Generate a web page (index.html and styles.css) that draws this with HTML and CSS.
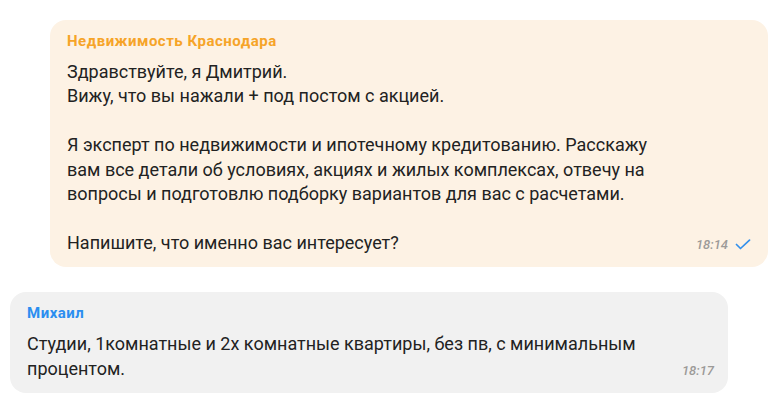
FILE: index.html
```html
<!DOCTYPE html>
<html>
<head>
    <meta charset="utf-8">
    <title>Чат</title>
    <link rel="stylesheet" href="styles.css">
</head>
<body>
    <div class="chat">
        <div class="msg msg-out">
            <div class="author author-orange">Недвижимость Краснодара</div>
            <div class="body">
                <div class="text">Здравствуйте, я Дмитрий.<br>Вижу, что вы нажали + под постом с акцией.<br><br>Я эксперт по недвижимости и ипотечному кредитованию. Расскажу вам все детали об условиях, акциях и жилых комплексах, отвечу на вопросы и подготовлю подборку вариантов для вас с расчетами.<br><br>Напишите, что именно вас интересует?</div>
                <div class="meta">
                    <span class="time">18:14</span>
                    <!-- галочка "отправлено" -->
                    <svg class="check" width="16" height="11" viewBox="0 0 16 11">
                        <path d="M1.5 5.5 L5.5 9.5 L14.5 1.2" fill="none" stroke="#3390ec" stroke-width="1.7" stroke-linecap="round" stroke-linejoin="round"/>
                    </svg>
                </div>
            </div>
        </div>

        <div class="msg msg-in">
            <div class="author author-blue">Михаил</div>
            <div class="body">
                <div class="text">Студии, 1комнатные и 2х комнатные квартиры, без пв, с минимальным процентом.</div>
                <div class="meta">
                    <span class="time">18:17</span>
                </div>
            </div>
        </div>
    </div>
</body>
</html>
```

FILE: styles.css
```css
body {
    margin: 0;
    background: #fff;
    font-family: Roboto, "Noto Sans", sans-serif;
    color: #222;
}
.chat {
    padding: 20px 0 0 10px;
    display: flex;
    flex-direction: column;
    gap: 25px;
}
.msg {
    width: 718px;
    box-sizing: border-box;
    border-radius: 16px;
    padding: 11px 17px 12px;
}
.msg-out { margin-left: 40px; background: #fdf2e4; }
.msg-in { background: #f1f1f1; padding-right: 14px; }

.author {
    font-size: 15px;
    line-height: 20px;
    font-weight: 700;
    letter-spacing: 0.5px;
    margin-bottom: 9px;
}
.author-orange { color: #f6a428; }
.author-blue { color: #2b8ef0; }

.body {
    display: flex;
    align-items: flex-end;
}
.text {
    width: 614px;
    font-size: 18px;
    line-height: 24.4px;
}
.meta {
    margin-left: auto;
    display: flex;
    align-items: center;
    gap: 7px;
    height: 22px;
}
.time {
    font-size: 13px;
    font-style: italic;
    font-weight: 500;
    color: #9c9a98;
}
.check { display: block; }
```
